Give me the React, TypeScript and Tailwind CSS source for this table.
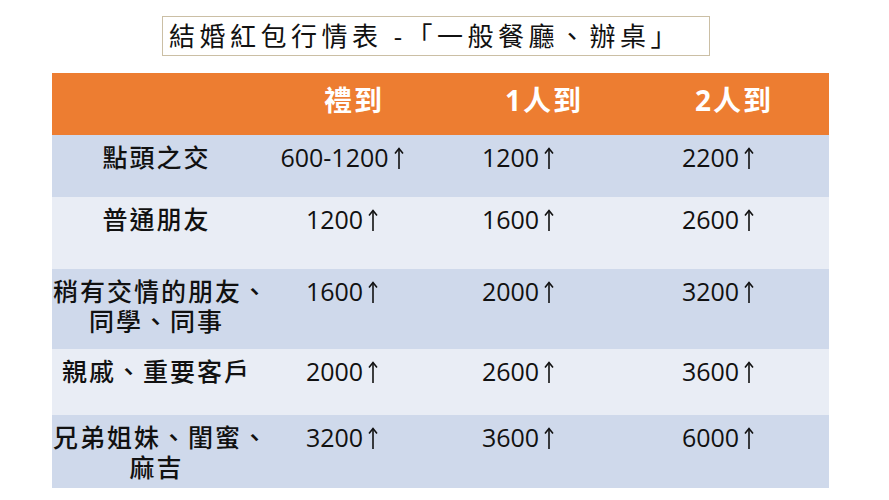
const rows = [
  { label: ["點頭之交"], h: "h-[62px]", bg: "bg-[#cfd9eb]", v: ["600-1200", "1200", "2200"] },
  { label: ["普通朋友"], h: "h-[72px]", bg: "bg-[#e9edf5]", v: ["1200", "1600", "2600"] },
  { label: ["稍有交情的朋友、", "同學、同事"], h: "h-[80px]", bg: "bg-[#cfd9eb]", v: ["1600", "2000", "3200"] },
  { label: ["親戚、重要客戶"], h: "h-[66px]", bg: "bg-[#e9edf5]", v: ["2000", "2600", "3600"] },
  { label: ["兄弟姐妹、閨蜜、", "麻吉"], h: "h-[73px]", bg: "bg-[#cfd9eb]", v: ["3200", "3600", "6000"] },
];

const font = { fontFamily: '"Open Sans", "Noto Sans CJK TC", sans-serif' };

// thin up arrow as drawn in the slide
function Amount({ n }: { n: string }) {
  return (
    <span className="inline-flex items-center">
      {n}
      <svg className="ml-[5px] mt-[1px]" width="10" height="22" viewBox="0 0 10 22" fill="none" stroke="#111" strokeWidth="1.6">
        <path d="M5 2 V22" />
        <path d="M1 6.5 L5 1.5 L9 6.5" />
      </svg>
    </span>
  );
}

export default function App() {
  return (
    <div className="w-[889px] h-[500px] bg-white text-[#111]" style={font}>
      <div className="pt-[16px] pl-[162px]">
        <div className="w-[548px] h-[40px] border border-[#cbbfa5] flex items-center pl-[6px] text-[26px] tracking-[4.5px] leading-none whitespace-nowrap overflow-hidden">
          結婚紅包行情表 -「一般餐廳、辦桌」
        </div>
      </div>
      <div className="ml-[52px] mt-[17px] w-[777px]">
        <div className="grid grid-cols-[207px_190px_190px_190px] h-[62px] bg-[#ed7d31] text-white font-bold text-[28px] tracking-[2px] items-center">
          <div />
          <div className="text-center pb-[8px]">禮到</div>
          <div className="text-center pb-[8px]">1人到</div>
          <div className="text-center pb-[8px]">2人到</div>
        </div>
        {rows.map((r, i) => (
          <div key={i} className={`grid grid-cols-[207px_190px_190px_190px] ${r.h} ${r.bg} text-[25px] leading-[32px] pt-[6px]`}>
            <div className="whitespace-nowrap font-medium tracking-[2px] leading-[30px] pt-[1px]">
              {r.label.map((l, j) =>
                j === 0 && r.label.length > 1 ? (
                  <div key={j} className="pl-[1px]">{l}</div>
                ) : (
                  <div key={j} className="text-center pl-[2px]">{l}</div>
                )
              )}
            </div>
            <div className="text-center pr-[24px]"><Amount n={r.v[0]} /></div>
            <div className="text-center pr-[52px]"><Amount n={r.v[1]} /></div>
            <div className="text-center pr-[32px]"><Amount n={r.v[2]} /></div>
          </div>
        ))}
      </div>
    </div>
  );
}
